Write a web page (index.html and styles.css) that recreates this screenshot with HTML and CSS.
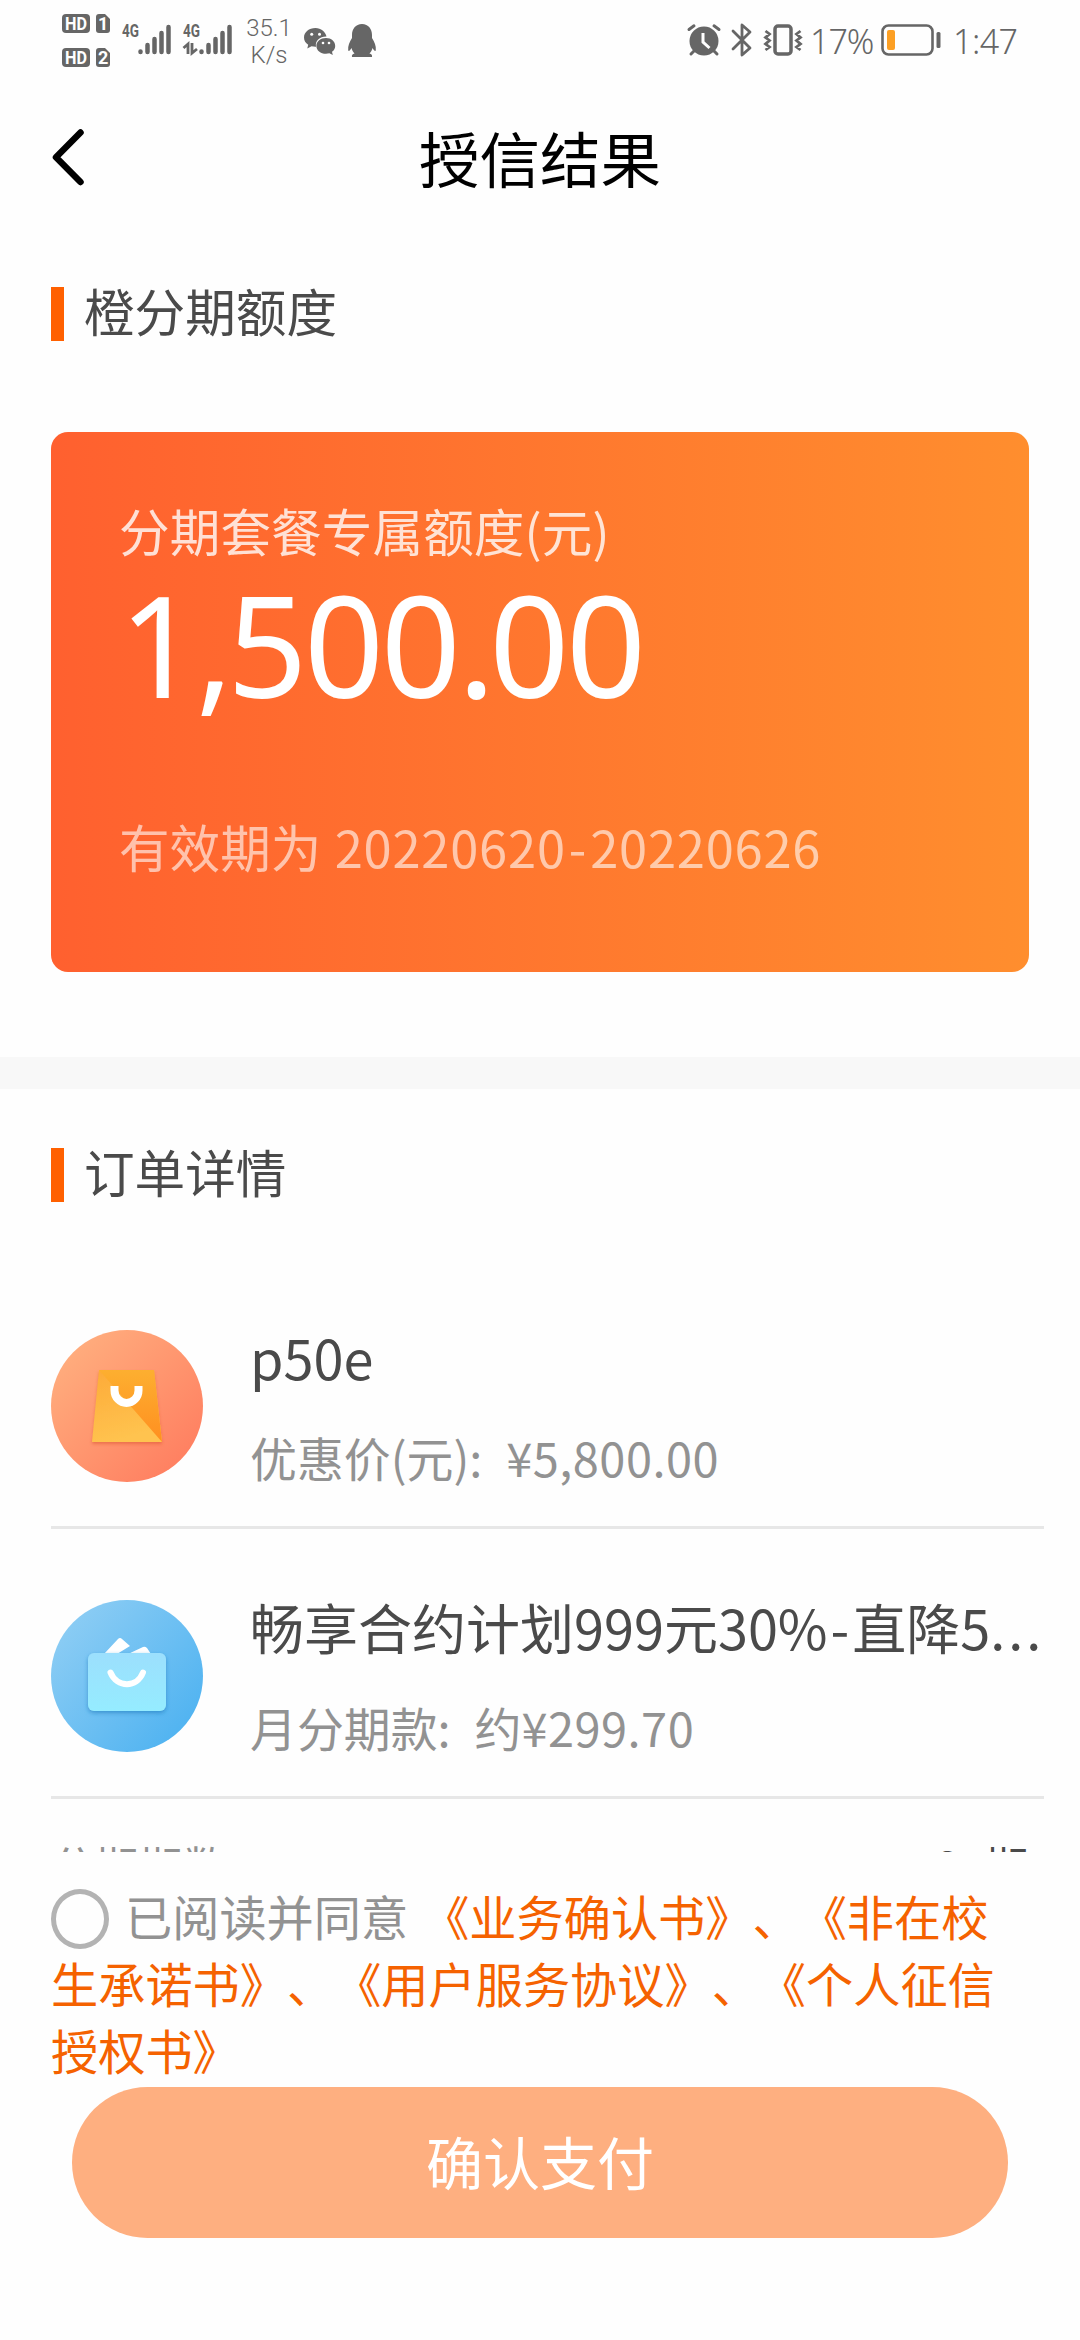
FILE: index.html
```html
<!DOCTYPE html>
<html lang="zh-CN">
<head>
<meta charset="utf-8">
<title>授信结果</title>
<link rel="stylesheet" href="styles.css">
</head>
<body>
<div class="status">
  <svg class="sims" width="48" height="56" viewBox="0 0 48 56">
    <g fill="#666">
      <rect x="0" y="1" width="28" height="19" rx="4"/>
      <path d="M37 1h6l5 5v11a3 3 0 0 1-3 3h-8a3 3 0 0 1-3-3V4a3 3 0 0 1 3-3z"/>
      <rect x="0" y="35" width="28" height="19" rx="4"/>
      <path d="M37 35h6l5 5v11a3 3 0 0 1-3 3h-8a3 3 0 0 1-3-3V38a3 3 0 0 1 3-3z"/>
    </g>
    <g class="sim-text" fill="#fff">
      <text x="3" y="16.500" textLength="22" lengthAdjust="spacingAndGlyphs">HD</text>
      <text x="36" y="16.500" textLength="9">1</text>
      <text x="3" y="50.500" textLength="22" lengthAdjust="spacingAndGlyphs">HD</text>
      <text x="36" y="50.500" textLength="9">2</text>
    </g>
  </svg>
  <svg class="signal" width="52" height="34" viewBox="0 0 52 34">
    <text class="net" x="1" y="15" textLength="17" lengthAdjust="spacingAndGlyphs">4G</text>
    <g stroke="#666" stroke-width="4.500" stroke-linecap="round"><path d="M19.500 29.500v.5M26.500 23v7M33.500 17v13M40.500 11v19M47.500 5v25"/></g>
  </svg>
  <svg class="signal second" width="52" height="34" viewBox="0 0 52 34">
    <text class="net" x="1" y="15" textLength="17" lengthAdjust="spacingAndGlyphs">4G</text>
    <path d="M1.500 26L6 22v10M10 21v10l5-4" fill="none" stroke="#666" stroke-width="2.800"/>
    <g stroke="#666" stroke-width="4.500" stroke-linecap="round"><path d="M19.500 29.500v.5M26.500 23v7M33.500 17v13M40.500 11v19M47.500 5v25"/></g>
  </svg>
  <div class="speed"><span>35.1</span><span>K/s</span></div>
  <svg class="wechat" width="32" height="28" viewBox="0 0 32 28">
    <path fill="#666" d="M11.500 1C5 1 0 5.200 0 10.500c0 3 1.600 5.600 4.200 7.300L3.300 21.500l4.200-2.200c1.200.3 2.600.5 4 .5h.6C10.700 14 16 9.400 22.500 9.600 21.500 4.700 17 1 11.500 1z"/>
    <path fill="#666" d="M22 11c-5.500 0-9.600 3.500-9.600 7.900s4.100 7.800 9.600 7.800c1.200 0 2.300-.2 3.400-.5l3.400 1.800-.8-3.200c2-1.400 3.200-3.500 3.200-5.900C31.200 14.500 27.300 11 22 11z"/>
    <g fill="#fff"><circle cx="7.700" cy="7.300" r="1.500"/><circle cx="15.500" cy="7.300" r="1.500"/><circle cx="19" cy="16" r="1.300"/><circle cx="25" cy="16" r="1.300"/></g>
  </svg>
  <svg class="qq" width="30" height="34" viewBox="0 0 30 34">
    <path fill="#666" d="M15 0C8.500 0 5 5 5 11v3C2.500 18 .8 22 1.200 26c.2 1.800 1.600.8 3.300-2 .5 2.200 1.500 4 3 5.500C5.500 30.200 4.500 31 5 33h20c.5-2-.5-2.800-2.500-3.500 1.500-1.500 2.500-3.300 3-5.500 1.700 2.800 3.100 3.800 3.300 2 .4-4-1.300-8-3.800-12v-3c0-6-3.500-11-10-11z"/>
  </svg>
  <svg class="alarm" width="34" height="32" viewBox="0 0 34 32">
    <circle cx="17" cy="17" r="14.500" fill="#666"/>
    <path d="M2 5.500L7 1.800M32 5.500L27 1.800M7 27l-3 3M27 27l3 3" stroke="#666" stroke-width="3" stroke-linecap="round"/>
    <path d="M16 9v9l6.500 6" fill="none" stroke="#fff" stroke-width="3"/>
  </svg>
  <svg class="bluetooth" width="22" height="34" viewBox="0 0 22 34">
    <path d="M2 8l17 17-8 7V2l8 7L2 26" fill="none" stroke="#666" stroke-width="2.800" stroke-linejoin="round" stroke-linecap="round"/>
  </svg>
  <svg class="vibrate" width="38" height="32" viewBox="0 0 38 32">
    <rect x="11" y="2" width="16" height="28" rx="3" fill="none" stroke="#666" stroke-width="3.500"/>
    <path d="M1.500 7l4 3-4 3.500 4 3-4 3.500 4 3-4 3M36.500 7l-4 3 4 3.500-4 3 4 3.500-4 3 4 3" fill="none" stroke="#666" stroke-width="2.800"/>
  </svg>
  <span class="percent">17%</span>
  <svg class="battery" width="60" height="32" viewBox="0 0 60 32">
    <rect x="1.500" y="1.500" width="50" height="29" rx="6" fill="none" stroke="#666" stroke-width="2.600"/>
    <rect x="6" y="6" width="8" height="20" rx="2" fill="#fc9f23"/>
    <rect x="55.500" y="8" width="4" height="16" rx="1.500" fill="#666"/>
  </svg>
  <span class="time">1:47</span>
</div>

<header class="header">
  <svg class="back" width="38" height="60" viewBox="0 0 38 60">
    <path d="M34.500 6.500L10 31.300l24.500 24.700" fill="none" stroke="#000" stroke-width="6.500" stroke-linecap="round" stroke-linejoin="round"/>
  </svg>
  <h1 class="title">授信结果</h1>
</header>

<main class="content">
  <h2 class="heading"><span>橙分期额度</span></h2>
  <section class="card">
    <p class="card-label">分期套餐专属额度(元)</p>
    <p class="amount">1<span class="mark">,</span>500<span class="mark">.</span>00</p>
    <p class="valid">有效期为 <span class="dates">20220620<span class="dash">-</span>20220626</span></p>
  </section>
  <div class="band"></div>
  <h2 class="heading order"><span>订单详情</span></h2>

  <div class="item">
    <svg class="item-icon" width="152" height="152" viewBox="0 0 152 152">
      <defs>
        <linearGradient id="peach" x1="0.100" y1="0.100" x2="0.900" y2="0.900"><stop offset="0" stop-color="#ffae7e"/><stop offset="1" stop-color="#ff7e60"/></linearGradient>
        <linearGradient id="bagFront" x1="0" y1="0" x2="0.300" y2="1"><stop offset="0" stop-color="#fdaa38"/><stop offset="1" stop-color="#ffc34f"/></linearGradient>
        <linearGradient id="bagSide" x1="0" y1="0" x2="0" y2="1"><stop offset="0" stop-color="#fdaf30"/><stop offset="1" stop-color="#ff8f20"/></linearGradient>
        <filter id="bagShade" x="-20%" y="-20%" width="140%" height="140%"><feDropShadow dx="0" dy="2" stdDeviation="1.800" flood-color="#d9502a" flood-opacity=".5"/></filter>
      </defs>
      <circle cx="76" cy="76" r="76" fill="url(#peach)"/>
      <path d="M48 40h55l8 72H41z" fill="url(#bagFront)" filter="url(#bagShade)"/>
      <path d="M48 40h55l8 72z" fill="url(#bagSide)"/>
      <path d="M63.500 56v4.500a12 12.500 0 0 0 24 0V56" fill="none" stroke="#fff" stroke-width="8"/>
    </svg>
    <div class="item-text">
      <p class="item-title">p50e</p>
      <p class="item-sub">优惠价(元)<span class="colon">:</span><span class="price">¥5,800.00</span></p>
    </div>
  </div>

  <div class="item">
    <svg class="item-icon" width="152" height="152" viewBox="0 0 152 152">
      <defs>
        <linearGradient id="sky" x1="0.100" y1="0.100" x2="0.900" y2="0.800"><stop offset="0" stop-color="#8dcdf4"/><stop offset="1" stop-color="#52b4f1"/></linearGradient>
        <linearGradient id="wallet" x1="0" y1="0" x2="0" y2="1"><stop offset="0" stop-color="#9cdffd"/><stop offset="1" stop-color="#95ecff"/></linearGradient>
        <filter id="walletShade" x="-20%" y="-20%" width="140%" height="140%"><feDropShadow dx="0" dy="2" stdDeviation="2" flood-color="#2277bb" flood-opacity=".6"/></filter>
      </defs>
      <circle cx="76" cy="76" r="76" fill="url(#sky)"/>
      <path d="M53 54l14-15q2-2 4 0l8 7-13 8zM77 54l15-7q2-1 4 1l4 6z" fill="#fff"/>
      <rect x="37" y="53" width="78" height="58" rx="6" fill="url(#wallet)" filter="url(#walletShade)"/>
      <path d="M59.500 72.500C66 88 86 88 92 72.500" fill="none" stroke="#fff" stroke-width="6" stroke-linecap="round"/>
    </svg>
    <div class="item-text">
      <p class="item-title">畅享合约计划999元30%<span class="dash">-</span>直降5<span class="dots">...</span></p>
      <p class="item-sub">月分期款<span class="colon">:</span>约<span class="price">¥299.70</span></p>
    </div>
  </div>

  <div class="row"><span class="row-name">分期期数</span><span class="row-value">24期</span></div>
</main>

<footer class="footer">
  <div class="agree-line"><span class="radio"></span><span class="agree">已阅读并同意</span><span>《业务确认书》、《非在校</span></div>
  <div class="agree-line">生承诺书》、《用户服务协议》、《个人征信</div>
  <div class="agree-line">授权书》</div>
  <button class="pay" type="button">确认支付</button>
</footer>
</body>
</html>
```
FILE: styles.css
```css
* { box-sizing: border-box; margin: 0; padding: 0; }

body {
  width: 1080px;
  height: 2340px;
  overflow: hidden;
  display: flex;
  flex-direction: column;
  background: #fefefe;
  font-family: "Noto Sans CJK SC", sans-serif;
  color: #4a4a4a;
}

p, h1, h2 { font-weight: 400; white-space: nowrap; }
svg { display: block; flex: none; overflow: visible; }

/* Status bar */
.status {
  height: 80px;
  padding: 13px 0 0 62px;
  display: flex;
  align-items: flex-start;
  color: #666;
}
.sim-text { font: 700 18px Roboto, sans-serif; }
.net { font: 700 18px Roboto, sans-serif; fill: #666; }
.signal { margin: 9px 0 0 11px; }
.second { margin-left: 9px; }
.speed {
  width: 46px;
  margin: 2px 0 0 12px;
  display: flex;
  flex-direction: column;
  align-items: center;
  font: 300 24px/27px Roboto, sans-serif;
}
.wechat { margin: 14px 0 0 12px; }
.qq { margin: 11px 0 0 11px; }
.alarm { margin: 11px 0 0 310px; }
.bluetooth { margin: 10px 0 0 10px; }
.vibrate { margin: 11px 0 0 11px; }
.percent, .time {
  font-family: "Noto Sans", sans-serif;
  font-size: 34px;
  line-height: 50px;
  font-weight: 300;
  white-space: nowrap;
}
.percent { width: 65px; margin: 3px 0 0 8px; letter-spacing: -1px; }
.battery { margin: 11px 0 0 6px; }
.time { margin: 3px 0 0 12px; letter-spacing: -.5px; }

/* Title bar */
.header {
  height: 152px;
  padding: 0 46px;
  display: grid;
  grid-template-columns: 38px 1fr 38px;
  align-items: center;
}
.title { padding-top: 2px; font-size: 60.500px; line-height: 82px; color: #000; text-align: center; }

.content { height: 1620px; padding-top: 55px; overflow: hidden; flex: none; }

.heading {
  height: 54px;
  margin-left: 51px;
  padding-left: 33px;
  background: linear-gradient(#ff6000, #ff6000) no-repeat 0 0 / 13px 54px;
  font-size: 50.600px;
  line-height: 46px;
}
.order { margin: 59px 0 57px 51px; }

/* Credit card */
.card {
  height: 540px;
  margin: 91px 51px 85px;
  padding: 68px 68px 0;
  border-radius: 17px;
  background: linear-gradient(90deg, #ff602f, #ff8e2e);
  color: #fff;
}
.card-label { font-size: 50.600px; line-height: 60px; letter-spacing: .1px; opacity: .8; }
.amount {
  margin: 14px 0 102px;
  font-family: "Noto Sans", sans-serif;
  font-size: 140px;
  line-height: 140px;
  letter-spacing: -3.300px;
}
.mark { letter-spacing: -6px; }
.valid { font-size: 50.600px; line-height: 60px; opacity: .6; }
.dates { margin-left: 2px; letter-spacing: .8px; }
.dash { padding: 0 3px; }

.band { height: 32px; background: #f8f8f8; }

/* Order rows */
.item {
  height: 270px;
  margin: 0 36px 0 51px;
  display: flex;
  border-bottom: 3px solid #e7e7e7;
}
.item-icon { margin-top: 71px; }
.item-text { margin: 58px 0 0 47px; }
.item-title { font-size: 54px; line-height: 80px; }
.item-sub { margin-top: 20px; font-size: 46.900px; line-height: 80px; color: #929292; }
.colon { display: inline-block; width: 37px; }
.price { letter-spacing: .5px; }
.dots { letter-spacing: 3px; }
.row {
  height: 133px;
  margin: 0 51px;
  display: flex;
  justify-content: space-between;
  font-size: 44px;
  line-height: 133px;
}
.row-name { color: #929292; }

/* Agreement and payment */
.footer { padding: 30px 51px 0; text-spacing-trim: space-all; }
.agree-line {
  height: 67px;
  display: flex;
  font-size: 47.200px;
  line-height: 67px;
  color: #f56200;
  white-space: nowrap;
}
.radio {
  width: 58px;
  height: 60px;
  margin: 7px 16px 0 0;
  border: 5px solid #b3b3b3;
  border-radius: 50%;
}
.agree { margin-right: 14px; color: #929292; }
.pay {
  display: block;
  width: 936px;
  height: 151px;
  margin: 4px auto 0;
  padding-bottom: 6px;
  border: 0;
  border-radius: 76px;
  background: #feaf80;
  color: #fff;
  font: 400 57px/80px "Noto Sans CJK SC", sans-serif;
}
```
